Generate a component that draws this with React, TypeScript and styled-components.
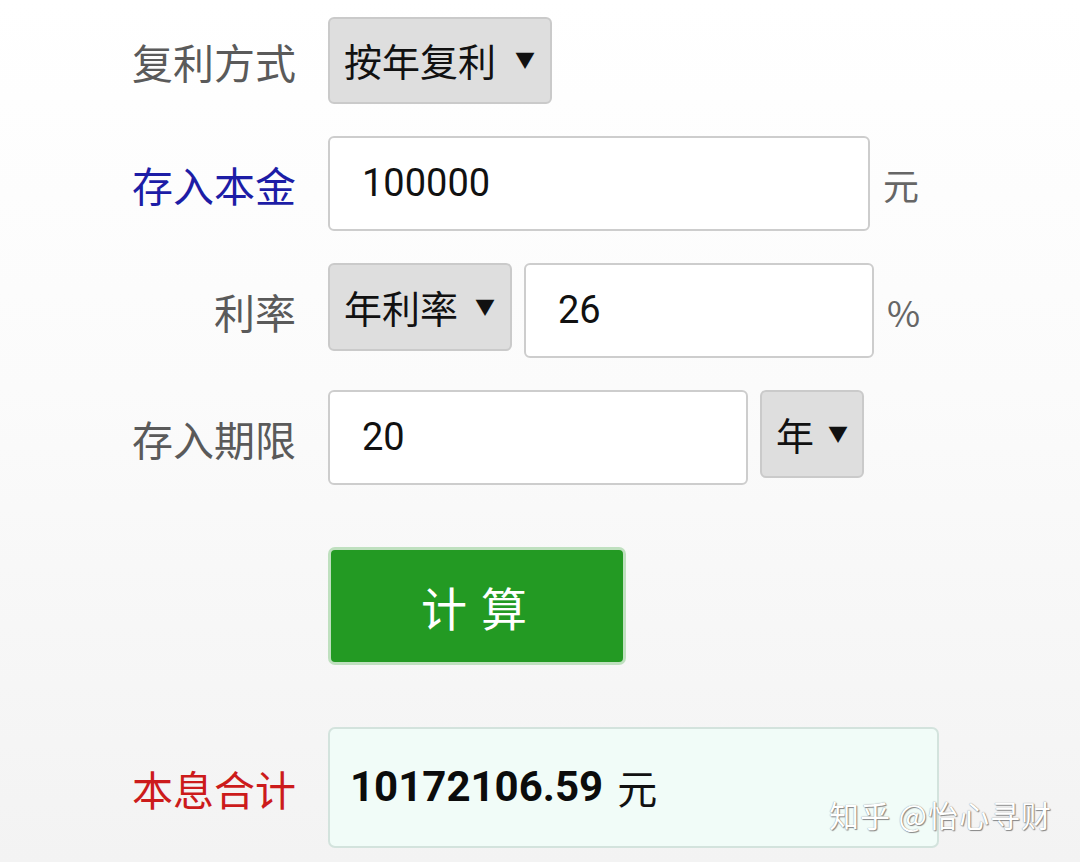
import styled, { createGlobalStyle } from "styled-components";

const GlobalStyle = createGlobalStyle`
  html, body {
    margin: 0;
    padding: 0;
  }
  body {
    font-family: Roboto, "Noto Sans CJK SC", sans-serif;
    background: linear-gradient(#ffffff 0%, #fbfbfb 45%, #f3f3f3 100%);
    min-height: 862px;
  }
`;

const Page = styled.div`
  position: relative;
  width: 1080px;
  height: 862px;
  overflow: hidden;
  padding: 17px 0 0 126px;
  box-sizing: border-box;
`;

const Row = styled.div<{ $gap?: number }>`
  display: flex;
  align-items: center;
  margin-bottom: ${(p) => p.$gap ?? 32}px;
`;

const Label = styled.div<{ $color?: string }>`
  width: 170px;
  margin-right: 32px;
  text-align: right;
  font-family: "Noto Sans CJK SC", sans-serif;
  font-size: 41px;
  color: ${(p) => p.$color ?? "#5a5a5a"};
  white-space: nowrap;
`;

const Controls = styled.div`
  display: flex;
  align-items: flex-start;
  gap: 12px;
`;

const Select = styled.div<{ $width: number; $height?: number }>`
  display: flex;
  align-items: center;
  justify-content: space-between;
  box-sizing: border-box;
  width: ${(p) => p.$width}px;
  height: ${(p) => p.$height ?? 88}px;
  padding: 0 15px 2px 14px;
  background: #dedede;
  border: 2px solid #cacaca;
  border-radius: 6px;
  font-family: "Noto Sans CJK SC", sans-serif;
  font-size: 38px;
  color: #111;
`;

const Arrow = styled.span`
  font-size: 20px;
  margin-left: 14px;
  color: #111;
`;

const Input = styled.input<{ $width: number }>`
  box-sizing: border-box;
  width: ${(p) => p.$width}px;
  height: 95px;
  padding: 0 0 2px 32px;
  background: #fff;
  border: 2px solid #cdcdcd;
  border-radius: 6px;
  font-family: Roboto, sans-serif;
  font-size: 38px;
  color: #111;
  outline: none;
`;

const Unit = styled.span`
  align-self: center;
  margin-left: 1px;
  font-family: "Noto Sans CJK SC", Roboto, sans-serif;
  font-size: 36px;
  color: #666;
`;

const CalcButton = styled.button`
  box-sizing: border-box;
  width: 298px;
  height: 118px;
  background: #239a23;
  border: 3px solid #bfe0bf;
  border-radius: 7px;
  color: #fff;
  font-family: "Noto Sans CJK SC", sans-serif;
  font-size: 46px;
  letter-spacing: 14px;
  padding-left: 14px;
  cursor: pointer;
`;

const ResultBox = styled.div`
  display: flex;
  align-items: center;
  box-sizing: border-box;
  width: 611px;
  height: 121px;
  padding: 0 0 2px 20px;
  background: #f1fcf8;
  border: 2px solid #d3e3dd;
  border-radius: 7px;
  font-family: Roboto, "Noto Sans CJK SC", sans-serif;
  font-size: 42px;
  font-weight: 700;
  color: #0c0c0c;
`;

const ResultUnit = styled.span`
  font-weight: 400;
  margin-left: 14px;
  font-family: "Noto Sans CJK SC", sans-serif;
  font-size: 40px;
  color: #111;
`;

const Spacer = styled.div`
  width: 170px;
  margin-right: 32px;
`;

const Watermark = styled.div`
  position: absolute;
  right: 28px;
  bottom: 26px;
  font-family: "Noto Sans CJK SC", sans-serif;
  font-size: 30px;
  color: #ffffff;
  text-shadow: 0 0 1px #777, 1px 1px 1px #888;
  letter-spacing: 1px;
`;

const App = () => {
  return (
    <>
      <GlobalStyle />
      <Page>
        <Row>
          <Label>复利方式</Label>
          <Controls>
            <Select $width={224} $height={87}>
              按年复利<Arrow>▼</Arrow>
            </Select>
          </Controls>
        </Row>

        <Row>
          <Label $color="#1d1da6">存入本金</Label>
          <Controls>
            <Input $width={542} defaultValue="100000" readOnly />
            <Unit>元</Unit>
          </Controls>
        </Row>

        <Row>
          <Label>利率</Label>
          <Controls>
            <Select $width={184}>
              年利率<Arrow>▼</Arrow>
            </Select>
            <Input $width={350} defaultValue="26" readOnly />
            <Unit>%</Unit>
          </Controls>
        </Row>

        <Row $gap={62}>
          <Label>存入期限</Label>
          <Controls>
            <Input $width={420} defaultValue="20" readOnly />
            <Select $width={104}>
              年<Arrow>▼</Arrow>
            </Select>
          </Controls>
        </Row>

        <Row $gap={62}>
          <Spacer />
          <CalcButton>计算</CalcButton>
        </Row>

        <Row>
          <Label $color="#cc1b1b">本息合计</Label>
          <ResultBox>
            10172106.59<ResultUnit>元</ResultUnit>
          </ResultBox>
        </Row>

        <Watermark>知乎 @怡心寻财</Watermark>
      </Page>
    </>
  );
};

export default App;
